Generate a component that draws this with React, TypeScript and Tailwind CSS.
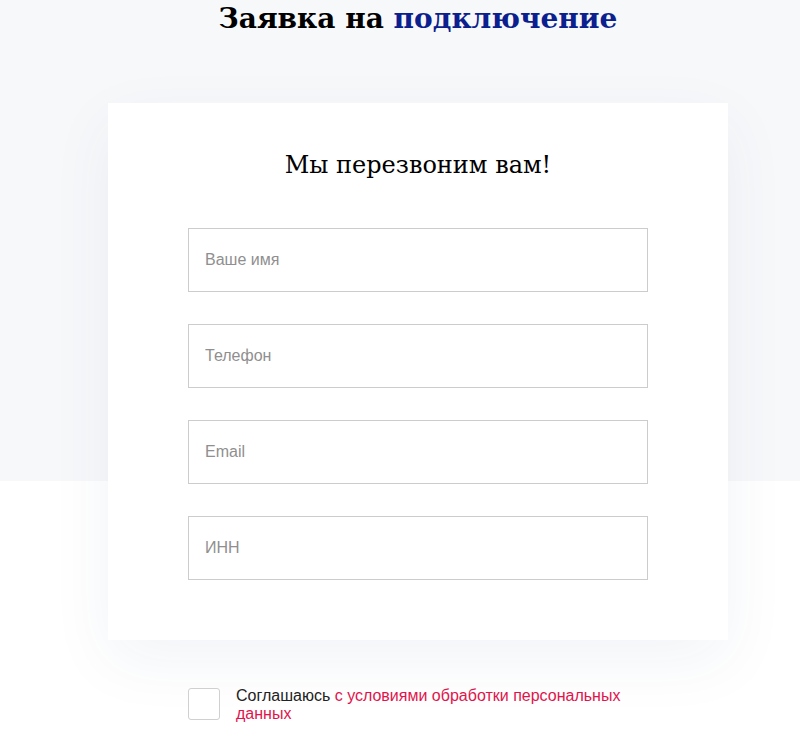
export default function App() {
  const fields = ['Ваше имя', 'Телефон', 'Email', 'ИНН']
  return (
    <div className="min-h-[732px] bg-[linear-gradient(to_bottom,#f7f8fa_481px,#ffffff_481px)] pl-[36px]">
      <div className="flex flex-col items-center">
        <h1 className="font-['DejaVu_Serif',serif] font-bold text-[28px] leading-[40px] text-black mt-[-1px]">
          Заявка на <span className="text-[#0b1f8e]">подключение</span>
        </h1>
        <div className="mt-[64px] w-[620px] bg-white px-[80px] pt-[46px] pb-[60px] shadow-[0_20px_60px_rgba(40,60,120,0.06)]">
          <h2 className="text-center font-['DejaVu_Serif',serif] text-[24px] leading-[32px] text-black">
            Мы перезвоним вам!
          </h2>
          <div className="mt-[47px] flex flex-col gap-[32px]">
            {fields.map((f) => (
              <input
                key={f}
                type="text"
                placeholder={f}
                className="h-[64px] w-full border border-[#cccccc] px-[16px] font-['Liberation_Sans',Arial,sans-serif] text-[16px] text-[#333] placeholder:text-[#8f8f8f] outline-none"
              />
            ))}
          </div>
        </div>
        <div className="mt-[48px] flex w-[460px] items-start gap-[16px]">
          <div className="h-[32px] w-[32px] shrink-0 rounded-[3px] border border-[#d0d0d0] bg-white" />
          <p className="mt-[-1px] font-['Liberation_Sans',Arial,sans-serif] text-[16px] leading-[18px] text-[#222]">
            Соглашаюсь <span className="text-[#e0144c]">с условиями обработки персональных данных</span>
          </p>
        </div>
      </div>
    </div>
  )
}
